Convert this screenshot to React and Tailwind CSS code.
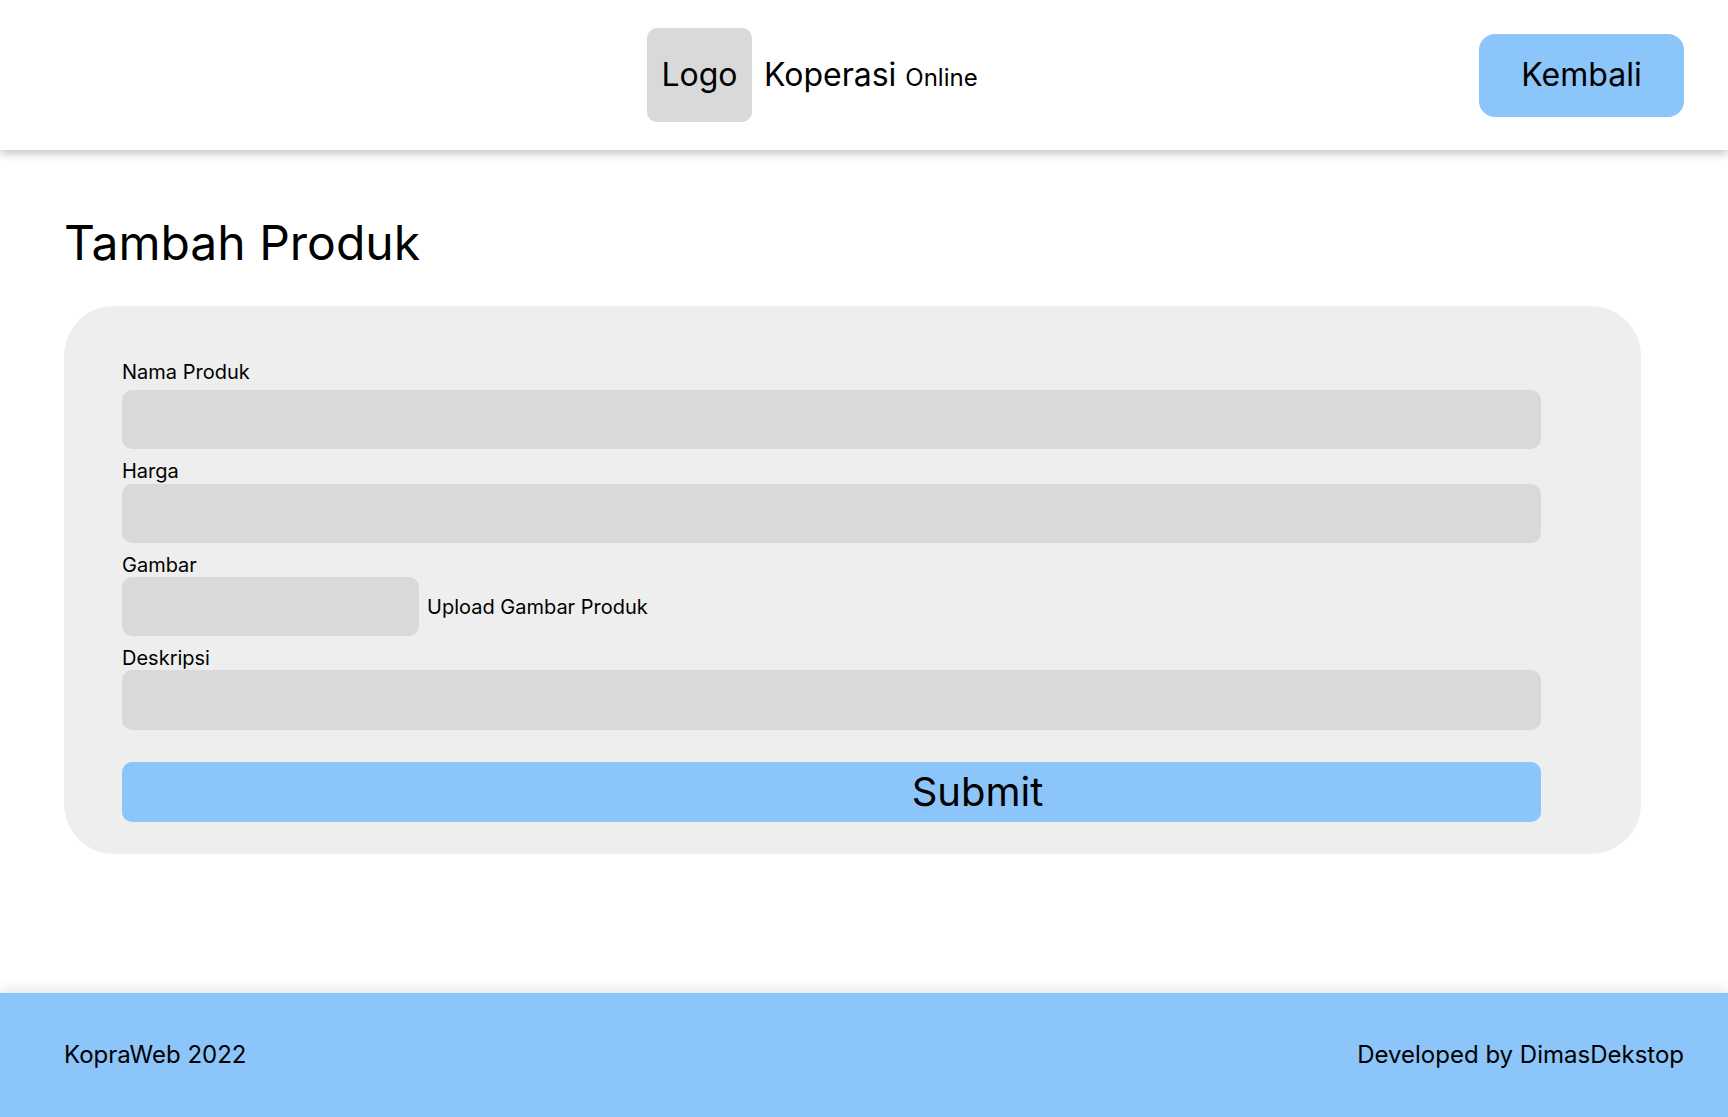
import React from "react";

function Field({ label, className = "", children }) {
  return (
    <div className={className}>
      <label className="block text-[20px] leading-[24px]">{label}</label>
      {children}
    </div>
  );
}

export default function App() {
  return (
    <div className="flex h-screen min-h-[1117px] flex-col bg-white font-[Inter,sans-serif] text-black">
      <header className="relative z-10 flex h-[150px] shrink-0 items-center justify-between bg-white pl-[647px] pr-[44px] shadow-[0_4px_8px_rgba(0,0,0,0.22)]">
        <div className="flex items-center">
          <div className="flex h-[94px] w-[105px] items-center justify-center rounded-[10px] bg-[#d9d9d9] text-[32px]">
            Logo
          </div>
          <div className="ml-[12px] text-[32px]">
            Koperasi <span className="text-[24px]">Online</span>
          </div>
        </div>
        <button className="flex h-[83px] w-[205px] items-center justify-center rounded-[16px] bg-[#8cc5f9] text-[32px]">
          Kembali
        </button>
      </header>

      <main className="flex-1 px-[64px]">
        <h1 className="mt-[64px] text-[48px] leading-[58px] font-normal">Tambah Produk</h1>

        <form
          className="mt-[34px] w-[1577px] rounded-[50px] bg-[#eeeeee] pb-[32px] pl-[58px] pt-[54px]"
          onSubmit={(e) => e.preventDefault()}
        >
          <div className="w-[1419px]">
            <Field label="Nama Produk">
              <input className="mt-[6px] block h-[59px] w-full rounded-[10px] bg-[#d9d9d9] outline-none" />
            </Field>
            <Field label="Harga" className="mt-[10px]">
              <input className="mt-[1px] block h-[59px] w-full rounded-[10px] bg-[#d9d9d9] outline-none" />
            </Field>
            <Field label="Gambar" className="mt-[10px]">
              <div className="flex items-center">
                <div className="h-[59px] w-[297px] rounded-[10px] bg-[#d9d9d9]" />
                <span className="ml-[8px] text-[20px]">Upload Gambar Produk</span>
              </div>
            </Field>
            <Field label="Deskripsi" className="mt-[10px]">
              <input className="block h-[60px] w-full rounded-[10px] bg-[#d9d9d9] outline-none" />
            </Field>
            <button
              type="submit"
              className="mt-[32px] flex h-[60px] w-full items-center justify-center rounded-[10px] bg-[#8cc5f9] pl-[292px] text-[40px]"
            >
              Submit
            </button>
          </div>
        </form>
      </main>

      <footer className="flex h-[124px] shrink-0 items-center justify-between bg-[#8cc5f9] pl-[64px] pr-[44px] text-[24px] shadow-[0_-4px_12px_rgba(0,0,0,0.1)]">
        <span>KopraWeb 2022</span>
        <span>Developed by DimasDekstop</span>
      </footer>
    </div>
  );
}
